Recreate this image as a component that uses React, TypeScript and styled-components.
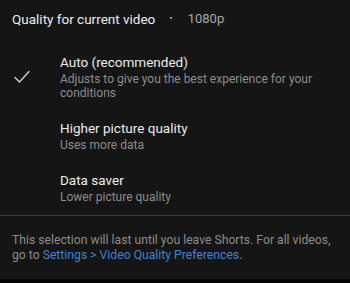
import styled, { createGlobalStyle } from 'styled-components';

const GlobalStyle = createGlobalStyle`
  html, body {
    margin: 0;
    padding: 0;
    background: #151515;
  }
  body {
    font-family: Roboto, 'Noto Sans', 'Liberation Sans', sans-serif;
    -webkit-font-smoothing: antialiased;
  }
`;

type Option = {
  title: string;
  subtitle: string;
  selected?: boolean;
};

const options: Option[] = [
  {
    title: 'Auto (recommended)',
    subtitle: 'Adjusts to give you the best experience for your conditions',
    selected: true,
  },
  { title: 'Higher picture quality', subtitle: 'Uses more data' },
  { title: 'Data saver', subtitle: 'Lower picture quality' },
];

function CheckIcon() {
  return (
    <svg width="16" height="14" viewBox="0 0 16 14">
      <polyline
        points="1 7.5 5.5 12 15 1.5"
        stroke="#d6d6d6"
        strokeWidth="1.3"
        fill="none"
        strokeLinecap="round"
        strokeLinejoin="round"
      />
    </svg>
  );
}

export default function App() {
  return (
    <>
      <GlobalStyle />
      <Sheet>
        <Header>
          <HeaderTitle>Quality for current video</HeaderTitle>
          <Dot>•</Dot>
          <Resolution>1080p</Resolution>
        </Header>
        <OptionList>
          {options.map((opt) => (
            <OptionRow key={opt.title}>
              <CheckCell>{opt.selected && <CheckIcon />}</CheckCell>
              <OptionText>
                <OptionTitle>{opt.title}</OptionTitle>
                <OptionSubtitle>{opt.subtitle}</OptionSubtitle>
              </OptionText>
            </OptionRow>
          ))}
        </OptionList>
        <Divider />
        <Footer>
          This selection will last until you leave Shorts. For all videos, go
          to <FooterLink>Settings &gt; Video Quality Preferences</FooterLink>.
        </Footer>
        <BottomBar />
      </Sheet>
    </>
  );
}

const Sheet = styled.div`
  width: 350px;
  height: 283px;
  background: #151515;
  display: flex;
  flex-direction: column;
  overflow: hidden;
`;

const Header = styled.div`
  display: flex;
  align-items: center;
  padding: 9px 12px 0 12px;
  height: 20px;
  font-size: 13.5px;
  line-height: 20px;
  color: #ececec;
`;

const HeaderTitle = styled.span``;

const Dot = styled.span`
  color: #9a9a9a;
  font-size: 10px;
  margin: 0 15px 0 14px;
`;

const Resolution = styled.span`
  font-size: 13px;
  color: #a8a8a8;
`;

const OptionList = styled.div`
  display: flex;
  flex-direction: column;
  gap: 19px;
  padding-top: 24px;
`;

const OptionRow = styled.div`
  display: grid;
  grid-template-columns: 60px 1fr;
  align-items: center;
  padding-right: 16px;
`;

const CheckCell = styled.div`
  display: flex;
  justify-content: center;
  padding-right: 16px;
`;

const OptionText = styled.div`
  display: flex;
  flex-direction: column;
  gap: 1px;
`;

const OptionTitle = styled.div`
  font-size: 13.5px;
  line-height: 18px;
  color: #ececec;
`;

const OptionSubtitle = styled.div`
  font-size: 12px;
  line-height: 14px;
  color: #8c8c8c;
`;

const Divider = styled.div`
  height: 1px;
  background: #3a3a3a;
  margin-top: 11px;
`;

const Footer = styled.p`
  margin: 0;
  padding: 17px 14px 0 12px;
  font-size: 12.2px;
  line-height: 14.5px;
  color: #8c8c8c;
`;

const FooterLink = styled.span`
  color: #3d84cf;
`;

const BottomBar = styled.div`
  margin-top: auto;
  height: 4px;
  background: #050505;
`;
